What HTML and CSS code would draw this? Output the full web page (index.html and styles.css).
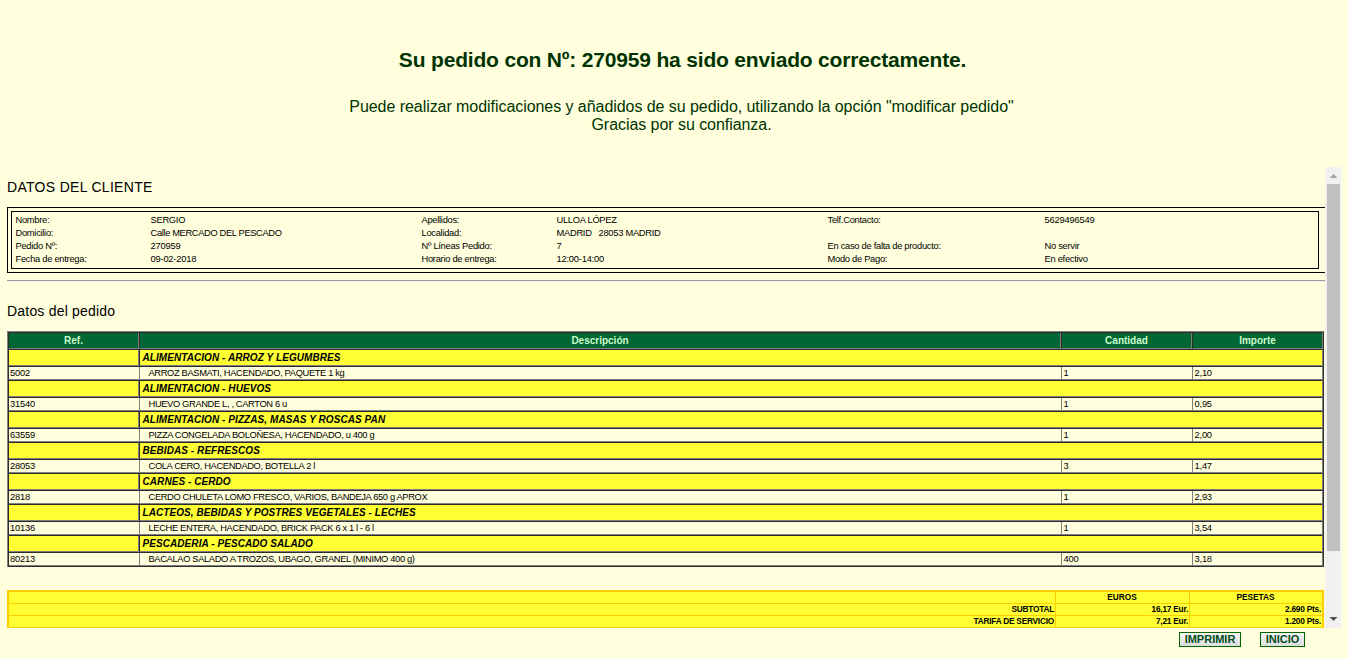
FILE: index.html
```html
<!DOCTYPE html>
<html lang="es">
<head>
<meta charset="utf-8">
<title>Pedido enviado</title>
<link rel="stylesheet" href="styles.css">
</head>
<body>
<header class="message">
  <h1>Su pedido con Nº: 270959 ha sido enviado correctamente.</h1>
  <p>Puede realizar modificaciones y añadidos de su pedido, utilizando la opción "modificar pedido"<br>Gracias por su confianza.</p>
</header>
<main class="frame">
  <div class="content">
    <h2 class="client-title">DATOS DEL CLIENTE</h2>
    <section class="client-outer">
      <div class="client">
        <span>Nombre:</span><span>SERGIO</span><span>Apellidos:</span><span>ULLOA LÓPEZ</span><span>Telf.Contacto:</span><span class="num">5629496549</span>
        <span>Domicilio:</span><span class="caps">Calle MERCADO DEL PESCADO</span><span>Localidad:</span><span>MADRID &nbsp; 28053 MADRID</span><span></span><span></span>
        <span>Pedido Nº:</span><span class="num">270959</span><span>Nº Líneas Pedido:</span><span>7</span><span>En caso de falta de producto:</span><span>No servir</span>
        <span>Fecha de entrega:</span><span class="num">09-02-2018</span><span>Horario de entrega:</span><span class="num">12:00-14:00</span><span>Modo de Pago:</span><span>En efectivo</span>
      </div>
    </section>
    <div class="rule"></div>
    <h2 class="order-title">Datos del pedido</h2>
    <section class="order">
      <div class="row head"><b>Ref.</b><b>Descripción</b><b>Cantidad</b><b>Importe</b></div>
      <div class="row group"><i></i><i>ALIMENTACION - ARROZ Y LEGUMBRES</i></div>
      <div class="row item"><span>5002</span><span>ARROZ BASMATI, HACENDADO, PAQUETE 1 kg</span><span>1</span><span>2,10</span></div>
      <div class="row group"><i></i><i>ALIMENTACION - HUEVOS</i></div>
      <div class="row item"><span>31540</span><span>HUEVO GRANDE L, , CARTON 6 u</span><span>1</span><span>0,95</span></div>
      <div class="row group"><i></i><i>ALIMENTACION - PIZZAS, MASAS Y ROSCAS PAN</i></div>
      <div class="row item"><span>63559</span><span>PIZZA CONGELADA BOLOÑESA, HACENDADO, u 400 g</span><span>1</span><span>2,00</span></div>
      <div class="row group"><i></i><i>BEBIDAS - REFRESCOS</i></div>
      <div class="row item"><span>28053</span><span>COLA CERO, HACENDADO, BOTELLA 2 l</span><span>3</span><span>1,47</span></div>
      <div class="row group"><i></i><i>CARNES - CERDO</i></div>
      <div class="row item"><span>2818</span><span>CERDO CHULETA LOMO FRESCO, VARIOS, BANDEJA 650 g APROX</span><span>1</span><span>2,93</span></div>
      <div class="row group"><i></i><i>LACTEOS, BEBIDAS Y POSTRES VEGETALES - LECHES</i></div>
      <div class="row item"><span>10136</span><span>LECHE ENTERA, HACENDADO, BRICK PACK 6 x 1 l - 6 l</span><span>1</span><span>3,54</span></div>
      <div class="row group"><i></i><i>PESCADERIA - PESCADO SALADO</i></div>
      <div class="row item"><span>80213</span><span>BACALAO SALADO A TROZOS, UBAGO, GRANEL (MINIMO 400 g)</span><span>400</span><span>3,18</span></div>
    </section>
    <section class="totals">
      <b></b><b class="mid">EUROS</b><b class="mid">PESETAS</b>
      <b>SUBTOTAL</b><b>16,17 Eur.</b><b>2.690 Pts.</b>
      <b>TARIFA DE SERVICIO</b><b>7,21 Eur.</b><b>1.200 Pts.</b>
    </section>
  </div>
  <div class="scrollbar">
    <svg class="arrow up" width="17" height="17" viewBox="0 0 17 17"><path d="M4.5 11L8.5 7L12.5 11Z"/></svg>
    <div class="thumb"></div>
    <svg class="arrow down" width="17" height="17" viewBox="0 0 17 17"><path d="M4.5 6L8.5 10L12.5 6Z"/></svg>
  </div>
</main>
<footer class="actions"><button class="print">IMPRIMIR</button><button class="home">INICIO</button></footer>
</body>
</html>
```
FILE: styles.css
```css
* { box-sizing: border-box; }
body { margin: 0; height: 658px; overflow: hidden; background: #ffffdd; color: #000; font-family: "Liberation Sans", Arial, sans-serif; }
h1, h2, p { margin: 0; font-weight: normal; }
.message { height: 167px; padding: 47px 0 0 17px; text-align: center; color: #003300; }
.message h1 { font-size: 21px; line-height: 26px; font-weight: bold; letter-spacing: -.18px; }
.message p { margin-top: 25px; padding-right: 2px; font-size: 16px; line-height: 18px; letter-spacing: -.055px; }
.frame { display: flex; width: 1341px; height: 461px; overflow: hidden; }
.content { width: 1325px; padding-left: 7px; overflow: hidden; }
.content h2 { font-size: 14px; line-height: 18px; letter-spacing: .2px; }
.content .client-title { padding-top: 11px; height: 40px; letter-spacing: .3px; }
.client-outer { width: 1318px; height: 66px; border: 1px solid #000; border-right: 0; padding: 3px 6px 3px 3px; }
.client { height: 58px; border: 1px solid #000; padding: 2px 0 0 3.5px; display: grid; grid-template-columns: 135px 271px 135px 271px 217px 1fr; grid-auto-rows: 13px; font-size: 9.33px; line-height: 13px; letter-spacing: -.28px; white-space: nowrap; }
.client .num { letter-spacing: -.2px; }
.client .caps { letter-spacing: -.36px; }
.rule { margin-top: 7px; height: 2px; border-top: 1px solid #9a9a9a; border-bottom: 1px solid #eeeeee; }
.order-title { padding-top: 20px; height: 49px; }
.order { width: 1317px; border: 1px solid #808080; border-right-color: #2c2c2c; border-bottom: 0; }
.row { display: grid; grid-template-columns: 130px 922px 131px 130px; border-left: 1px solid #2c2c2c; border-right: 1px solid #808080; border-bottom: 1px solid #2c2c2c; white-space: nowrap; }
.head { height: 18px; border-top: 1px solid #2c2c2c; }
.row > * { border-bottom: 1px solid #808080; }
.head b { background: #006633; color: #ccffcc; border-left: 1px solid #2c2c2c; border-right: 1px solid #808080; font-size: 10px; line-height: 15px; text-align: center; }
.head b:first-child { border-left: 0; }
.head b:last-child { border-right: 0; }
.group { grid-template-columns: 130px 1fr; height: 17px; }
.group i { background: #ffff33; font-size: 10px; font-weight: bold; line-height: 15px; padding-left: 2.5px; letter-spacing: .07px; }
.group i:first-child { border-right: 1px solid #808080; }
.group i:last-child { border-left: 1px solid #2c2c2c; }
.item { height: 14px; font-size: 9.33px; line-height: 12px; letter-spacing: -.2px; }
.item span { padding-left: 1.5px; border-left: 1px solid #808080; }
.item span:first-child { padding-left: 1px; border-left: 0; }
.item span:nth-child(2) { padding-left: 8.5px; letter-spacing: -.36px; }
.totals { width: 1317px; height: 38px; margin-top: 23px; border: 2px solid #ffcc00; border-bottom-width: 1px; background: #ffcc00; display: grid; grid-template-columns: 1046px 133px 132px; grid-template-rows: 11px 11px 11px; gap: 1px; font-size: 8.3px; line-height: 11px; letter-spacing: -.23px; }
.totals b { background: #ffff33; padding-right: 1px; text-align: right; }
.totals .mid { text-align: center; letter-spacing: 0; }
.scrollbar { width: 16px; background: #f1f1f1; display: flex; flex-direction: column; align-items: center; }
.arrow { flex: none; width: 17px; height: 17px; }
.up { fill: #a3a3a3; }
.down { fill: #505050; margin-top: 60px; }
.thumb { width: 13px; height: 367px; background: #c1c1c1; }
.actions { display: flex; gap: 19px; padding: 4px 0 0 1179px; }
.actions button { height: 15px; padding: 0; border: 1px solid #006600; background: linear-gradient(#f4f4f4, #dddddd); color: #004d1a; font: bold 11px/13px "Liberation Sans", Arial, sans-serif; }
.print { width: 62px; }
.home { width: 45px; }
```
